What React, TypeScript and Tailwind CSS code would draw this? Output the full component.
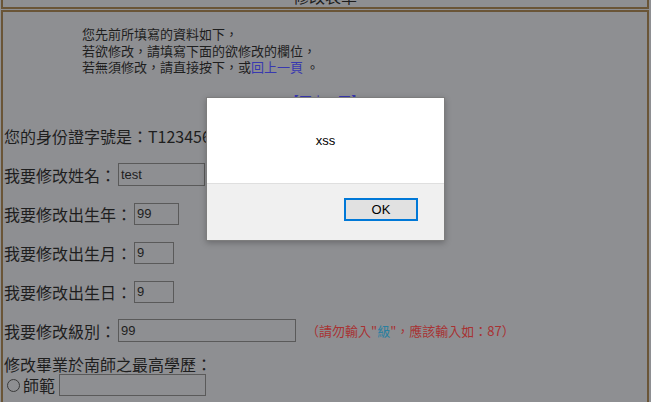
export default function App() {
  const brown = "border-[#6a5537]";
  return (
    <div className="relative w-[651px] h-[402px] overflow-hidden bg-[#8e8f92] text-[#1e1e1e] font-['Noto_Sans_CJK_TC',sans-serif]">
      <div className="pl-[1px] pr-[2px]">
        {/* header cell, mostly scrolled away */}
        <div className={`relative h-[9px] border-x-2 border-b-2 ${brown} overflow-hidden`}>
          <div className="flex justify-center mt-[-12px] text-[16px] leading-none">修改表單</div>
        </div>

        <div className={`mt-[1px] h-[400px] border-x-2 border-t-2 ${brown}`}>
          <div className="pl-[79px] pt-[14px] text-[13px] leading-[16.5px]">
            <p>您先前所填寫的資料如下，</p>
            <p>若欲修改，請填寫下面的欲修改的欄位，</p>
            <p>
              若無須修改，請直接按下，或<span className="text-[#3838b0]">回上一頁</span> 。
            </p>
          </div>

          <div className="mt-[17px] flex justify-center text-[13px] leading-[16.5px] text-[#3838b0]">
            【回上一頁】
          </div>

          <div className="mt-[7px] flex flex-col text-[16px] leading-[20px]">
            <div className="h-[39px] flex items-center pl-[1px]">您的身份證字號是：T123456789</div>

            <div className="h-[39px] flex items-center pl-[1px]">
              <span className="w-[114px] shrink-0">我要修改姓名：</span>
              <div className="w-[87px] h-[23px] border border-[#5a5a5a] flex items-center pl-[2px] text-[13px] font-['Liberation_Sans',sans-serif]">test</div>
            </div>

            <div className="h-[39px] flex items-center pl-[1px]">
              <span className="w-[130px] shrink-0">我要修改出生年：</span>
              <div className="w-[45px] h-[22px] border border-[#5a5a5a] flex items-center pl-[2px] text-[13px] font-['Liberation_Sans',sans-serif]">99</div>
            </div>

            <div className="h-[39px] flex items-center pl-[1px]">
              <span className="w-[130px] shrink-0">我要修改出生月：</span>
              <div className="w-[40px] h-[22px] border border-[#5a5a5a] flex items-center pl-[2px] text-[13px] font-['Liberation_Sans',sans-serif]">9</div>
            </div>

            <div className="h-[39px] flex items-center pl-[1px]">
              <span className="w-[130px] shrink-0">我要修改出生日：</span>
              <div className="w-[40px] h-[22px] border border-[#5a5a5a] flex items-center pl-[2px] text-[13px] font-['Liberation_Sans',sans-serif]">9</div>
            </div>

            <div className="h-[39px] flex items-center pl-[1px]">
              <span className="w-[114px] shrink-0">我要修改級別：</span>
              <div className="w-[178px] h-[23px] border border-[#5a5a5a] flex items-center pl-[2px] text-[13px] font-['Liberation_Sans',sans-serif]">99</div>
              <span className="ml-[10px] text-[13px] text-[#a83232]">
                （請勿輸入"<span className="text-[#2a7fa0]">級</span>"，應該輸入如：87）
              </span>
            </div>

            <div className="mt-[4px] h-[20px] flex items-center pl-[1px]">修改畢業於南師之最高學歷：</div>

            <div className="h-[22px] flex items-center pl-[1px]">
              <span className="ml-[3px] w-[13px] h-[13px] rounded-full border border-[#3a3a3a] shrink-0" />
              <span className="ml-[3px]">師範</span>
              <div className="ml-[4px] w-[147px] h-[22px] border border-[#5a5a5a]" />
            </div>
          </div>
        </div>
      </div>

      {/* alert dialog */}
      <div className="absolute left-[206px] top-[97px] w-[239px] h-[144px] border border-[#7d7d7d] bg-[#f0f0f0] flex flex-col font-['Liberation_Sans',sans-serif] shadow-[0_2px_6px_rgba(0,0,0,0.25)]">
        <div className="h-[86px] bg-white border-b border-[#dfdfdf] flex items-center justify-center text-[13px] text-black">
          xss
        </div>
        <div className="flex-1 flex justify-end pr-[26px] pt-[14px]">
          <div className="w-[74px] h-[23px] border-2 border-[#0078d7] bg-[#e1e1e1] flex items-center justify-center text-[13px] text-black">
            OK
          </div>
        </div>
      </div>
    </div>
  );
}
